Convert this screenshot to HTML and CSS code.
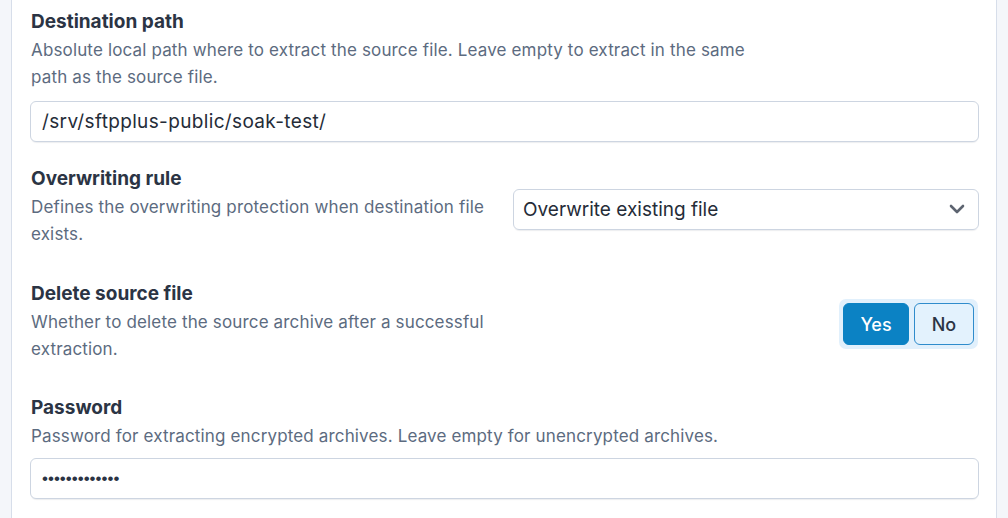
FILE: index.html
```html
<!DOCTYPE html>
<html lang="en">
<head>
<meta charset="utf-8">
<title>Extract archive settings</title>
<link rel="stylesheet" href="styles.css">
</head>
<body>
<div class="panel">
  <div class="field field-first">
    <div class="label">Destination path</div>
    <div class="desc desc-wide">Absolute local path where to extract the source file. Leave empty to extract in the same path as the source file.</div>
    <input class="text-input" type="text" value="/srv/sftpplus-public/soak-test/">
  </div>

  <div class="field field-split field-second">
    <div class="info">
      <div class="label">Overwriting rule</div>
      <div class="desc">Defines the overwriting protection when destination file exists.</div>
    </div>
    <div class="control">
      <div class="select">
        <span class="select-value">Overwrite existing file</span>
        <svg class="chevron" width="16" height="10" viewBox="0 0 16 10"><path d="M2 2 L8 8 L14 2" fill="none" stroke="#5d6470" stroke-width="2.6" stroke-linecap="round" stroke-linejoin="round"/></svg>
      </div>
    </div>
  </div>

  <div class="field field-split field-third">
    <div class="info">
      <div class="label">Delete source file</div>
      <div class="desc">Whether to delete the source archive after a successful extraction.</div>
    </div>
    <div class="control control-end">
      <div class="toggle">
        <button class="toggle-btn toggle-on">Yes</button>
        <button class="toggle-btn toggle-off">No</button>
      </div>
    </div>
  </div>

  <div class="field field-last">
    <div class="label">Password</div>
    <div class="desc desc-wide">Password for extracting encrypted archives. Leave empty for unencrypted archives.</div>
    <input class="text-input pass" type="password" value="sftpplus-soak">
  </div>
</div>
</body>
</html>
```

FILE: styles.css
```css
* { box-sizing: border-box; }
html, body { margin: 0; padding: 0; }
body {
  background: #f4f6fa;
  font-family: Inter, "Noto Sans", sans-serif;
  height: 518px;
  overflow: hidden;
}
.panel {
  margin-left: 11px;
  width: 986px;
  min-height: 518px;
  background: #ffffff;
  border-left: 1px solid #d7deea;
  border-right: 1px solid #d7deea;
  padding: 7px 17px 0 18px;
}
.field { margin-top: 30px; }
.field-first { margin-top: 0; }
.field-second { margin-top: 22px; }
.field-third { margin-top: 31px; }
.field-last { margin-top: 30px; }
.field-split {
  display: flex;
  align-items: center;
  gap: 16px;
}
.info { width: 467px; flex: none; }
.control { flex: 1; display: flex; margin-top: 6px; }
.control-end { justify-content: flex-end; }
.label {
  font-size: 19px;
  font-weight: 700;
  line-height: 30px;
  color: #2b3444;
  padding-left: 1px;
}
.desc {
  font-size: 17px;
  letter-spacing: 0.15px;
  line-height: 27px;
  color: #5c6b80;
  padding-left: 1px;
}
.desc-wide { max-width: 756px; }
.text-input {
  display: block;
  width: 100%;
  height: 41px;
  margin-top: 10px;
  border: 1px solid #cdd5e1;
  border-radius: 6px;
  padding: 0 11px;
  font-family: Inter, "Noto Sans", sans-serif;
  font-size: 19px;
  letter-spacing: 0.35px;
  color: #252c38;
  background: #fff;
  box-shadow: 0 2px 1px -1px rgba(30, 40, 60, 0.08);
  outline: none;
}
.pass {
  margin-top: 8px;
  letter-spacing: 0;
  font-family: "Liberation Sans", Arial, sans-serif;
  font-size: 17px;
  color: #2b3444;
}
.select {
  width: 100%;
  height: 41px;
  border: 1px solid #cdd5e1;
  border-radius: 6px;
  display: flex;
  align-items: center;
  justify-content: space-between;
  padding: 0 13px 0 9px;
  font-size: 19px;
  color: #252c38;
  box-shadow: 0 2px 1px -1px rgba(30, 40, 60, 0.08);
}
.chevron { display: block; }
.toggle {
  display: flex;
  gap: 5px;
  padding: 4px;
  background: #e1f0fc;
  border-radius: 7px;
  margin-right: 1px;
}
.toggle-btn {
  height: 42px;
  border-radius: 6px;
  font-family: Inter, "Noto Sans", sans-serif;
  font-size: 18px;
  font-weight: 500;
  padding: 0;
}
.toggle-on {
  width: 66px;
  background: #0b82c4;
  border: 1px solid #0b82c4;
  color: #ffffff;
}
.toggle-off {
  width: 60px;
  background: #e3f2fd;
  border: 1px solid #2f8ccc;
  color: #2b3444;
}
```
